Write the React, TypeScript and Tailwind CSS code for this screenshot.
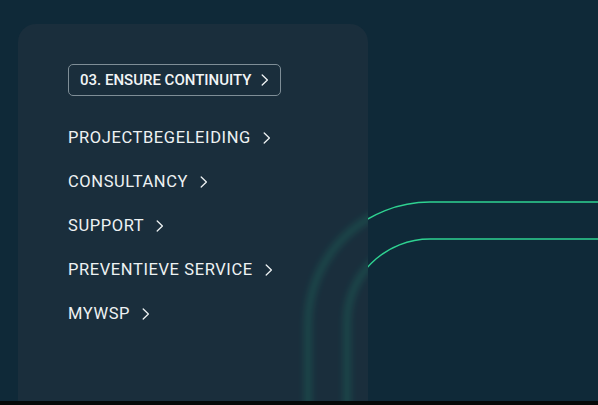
const items = ["PROJECTBEGELEIDING", "CONSULTANCY", "SUPPORT", "PREVENTIEVE SERVICE", "MYWSP"];

const Chevron = ({ className }: { className?: string }) => (
  <svg viewBox="0 0 8 12" fill="none" className={className}>
    <path d="M1.2 1 L6.4 6 L1.2 11" stroke="currentColor" strokeWidth="1.3" strokeLinecap="round" strokeLinejoin="round" />
  </svg>
);

const arcs = [
  "M598 202 H430 A122 122 0 0 0 308 324 V420",
  "M598 239 H430 A83 83 0 0 0 347 322 V420",
];

// green arcs, glowing where they pass behind the panel
const Lines = () => (
  <svg className="absolute inset-0 h-full w-full" viewBox="0 0 598 401" fill="none">
    <defs>
      <clipPath id="outside">
        <rect x="368" y="0" width="230" height="401" />
      </clipPath>
      <clipPath id="inside">
        <rect x="0" y="0" width="368" height="401" />
      </clipPath>
      <filter id="soft" x="-50%" y="-50%" width="200%" height="200%">
        <feGaussianBlur stdDeviation="3.5" />
      </filter>
    </defs>
    <g clipPath="url(#inside)">
      {arcs.map((d) => (
        <path key={d} d={d} stroke="#1cc48d" strokeWidth="6" filter="url(#soft)" />
      ))}
    </g>
    <g clipPath="url(#outside)">
      {arcs.map((d) => (
        <path key={d} d={d} stroke="#2fd291" strokeWidth="1.4" />
      ))}
    </g>
  </svg>
);

export default function App() {
  return (
    <div className="w-[598px] h-[405px] overflow-hidden bg-[#050909]" style={{ fontFamily: "Roboto, 'Noto Sans', sans-serif" }}>
      <section className="relative h-[401px] bg-[#0f2938] pl-[18px] pt-[24px]">
        <Lines />
        <nav className="relative h-full w-[350px] rounded-t-[18px] bg-[#1d2f3d]/80 pl-[50px] pt-[40px]">
          <a className="inline-flex h-[32px] items-center gap-[10px] rounded-[5px] border border-[#7f8e97] pl-[11px] pr-[11px] text-[15px] font-medium tracking-[0px] text-[#f2f5f6]">
            03. ENSURE CONTINUITY
            <Chevron className="h-[12px] w-[8px]" />
          </a>
          <ul className="mt-[31px] flex flex-col gap-[22px]">
            {items.map((item) => (
              <li key={item} className="flex h-[22px] items-center gap-[12px] text-[16.5px] font-normal tracking-[0.6px] text-[#eef2f3]">
                {item}
                <Chevron className="h-[12px] w-[8px]" />
              </li>
            ))}
          </ul>
        </nav>
      </section>
    </div>
  );
}
